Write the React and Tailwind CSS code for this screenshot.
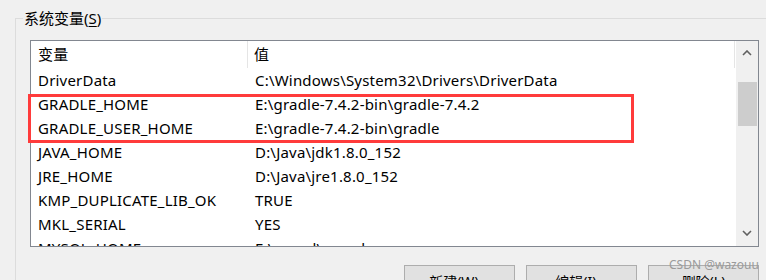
import React from "react";

const rows = [
  ["DriverData", "C:\\Windows\\System32\\Drivers\\DriverData"],
  ["GRADLE_HOME", "E:\\gradle-7.4.2-bin\\gradle-7.4.2"],
  ["GRADLE_USER_HOME", "E:\\gradle-7.4.2-bin\\gradle"],
  ["JAVA_HOME", "D:\\Java\\jdk1.8.0_152"],
  ["JRE_HOME", "D:\\Java\\jre1.8.0_152"],
  ["KMP_DUPLICATE_LIB_OK", "TRUE"],
  ["MKL_SERIAL", "YES"],
  ["MYSQL_HOME", "E:\\mysql\\mysql"],
];

export default function App() {
  return (
    <div
      className="relative w-[766px] h-[280px] overflow-hidden bg-[#f0f0f0] text-[15px] tracking-[0.2px] text-black"
      style={{ fontFamily: '"Noto Sans", "Noto Sans CJK SC", sans-serif' }}
    >
      <div className="pl-[15px] pt-[18px]">
        <div className="border-l border-t border-[#dcdcdc] h-[300px]">
          <div className="-mt-[10px] ml-[7px] w-max px-[1px] bg-[#f0f0f0] leading-[18px] h-[18px] tracking-normal">
            系统变量(<span className="underline underline-offset-2">S</span>)
          </div>
          <div className="ml-[14px] mt-[13px] w-[729px] h-[207px] border border-[#828790] bg-white flex overflow-hidden">
            <div className="w-[705px] flex flex-col">
              <div className="h-[27px] flex shrink-0">
                <div className="w-[217px] pl-[7px] flex items-center border-r border-[#e5e5e5]">变量</div>
                <div className="flex-1 pl-[6px] flex items-center border-r border-[#e5e5e5]">值</div>
              </div>
              {rows.map(([k, v]) => (
                <div key={k} className="h-[24px] flex shrink-0 items-center leading-[24px]">
                  <div className="w-[217px] pl-[7px] whitespace-nowrap">{k}</div>
                  <div className="flex-1 pl-[7px] whitespace-nowrap">{v}</div>
                </div>
              ))}
            </div>
            <div className="w-[22px] ml-[1px] bg-[#f0f0f0] flex flex-col items-center">
              <div className="h-[24px] flex items-center justify-center">
                <svg width="10" height="6" viewBox="0 0 10 6">
                  <path d="M1 5 L5 1 L9 5" fill="none" stroke="#606060" strokeWidth="1.6" />
                </svg>
              </div>
              <div className="mt-[17px] w-[19px] h-[44px] bg-[#cdcdcd]" />
              <div className="flex-1" />
              <div className="h-[26px] flex items-center justify-center">
                <svg width="10" height="6" viewBox="0 0 10 6">
                  <path d="M1 1 L5 5 L9 1" fill="none" stroke="#606060" strokeWidth="1.6" />
                </svg>
              </div>
            </div>
          </div>
          <div className="mt-[18px] ml-[388px] flex gap-[11px]">
            {["新建(W)...", "编辑(I)...", "删除(L)"].map((t) => (
              <div
                key={t}
                className="w-[111px] h-[26px] border border-[#adadad] bg-[#e1e1e1] flex items-start justify-center text-[14px] leading-[20px] pt-[6px] tracking-normal"
              >
                {t}
              </div>
            ))}
          </div>
        </div>
      </div>
      <div className="absolute left-[28px] top-[94px] w-[606px] h-[49px] border-[3px] border-[#ff3b3b]" />
      <div className="absolute left-[669px] top-[258px] text-[12px] text-[#9a9a9a] leading-[14px] tracking-normal">
        CSDN @wazouu
      </div>
    </div>
  );
}
